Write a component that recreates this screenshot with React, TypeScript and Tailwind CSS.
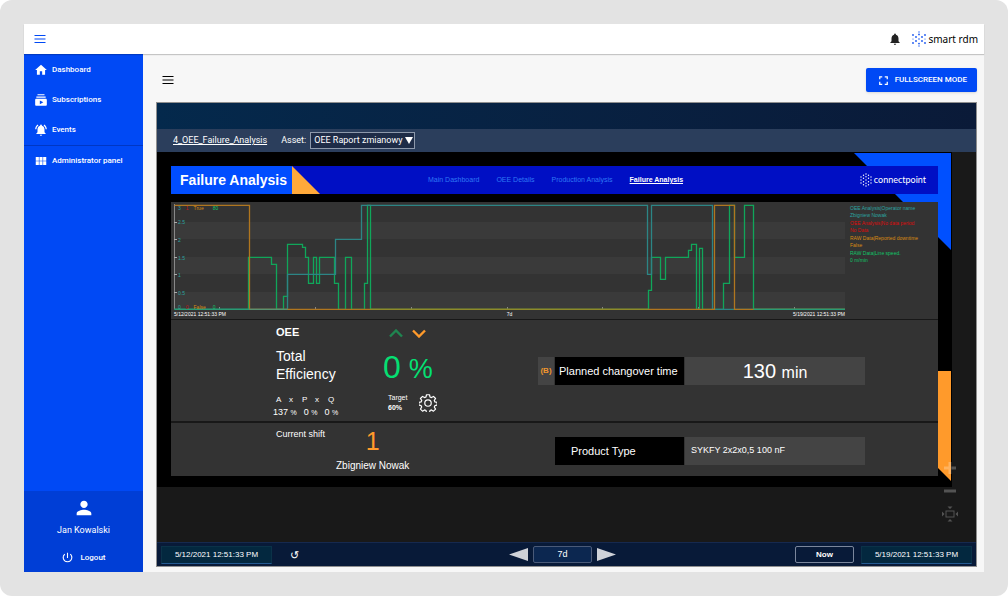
import { ReactNode } from "react";
import {
  MdFullscreen,
  MdHome,
  MdNotifications,
  MdNotificationsActive,
  MdPerson,
  MdPowerSettingsNew,
  MdSubscriptions,
  MdViewModule,
} from "react-icons/md";

type Point = [number, number];

const CHART_WIDTH = 671;
const CHART_HEIGHT = 106;
const BASE = 105;
const TOP = 1;

// Each entry is "from this x on, the line runs at this y"
const lineSpeed: Point[] = [
  [0, BASE], [74, 53], [97, 60], [102, BASE], [109, 92], [113, 40], [128, 43],
  [131, 53], [134, 79], [139, 53], [142, 79], [145, 53], [160, 79], [164, BASE],
  [171, 53], [177, BASE], [190, 79], [193, TOP], [196, BASE], [474, 86],
  [477, 53], [486, 75], [491, 53], [514, 46], [517, 40], [522, BASE], [525, 44],
  [528, BASE], [549, 79], [555, TOP], [560, 53], [570, TOP], [579, BASE],
];

const operator: Point[] = [
  [0, BASE], [113, 70], [161, 35], [187, TOP], [473, 70], [477, TOP], [538, BASE],
];

const downtime: Point[] = [[0, TOP], [75, BASE], [540, TOP], [560, BASE]];

const legend = [
  { name: "OEE Analysis|Operator name", value: "Zbigniew Nowak", color: "text-[#2ba5a0]" },
  { name: "OEE Analysis|No data period", value: "No Data", color: "text-[#dd0c0c]" },
  { name: "RAW Data|Reported downtime", value: "False", color: "text-[#d98a12]" },
  { name: "RAW Data|Line speed.", value: "0 m/min", color: "text-[#10c468]" },
];

const menu = [
  { label: "Dashboard", icon: <MdHome size={14} /> },
  { label: "Subscriptions", icon: <MdSubscriptions size={14} /> },
  { label: "Events", icon: <MdNotificationsActive size={14} /> },
];

const tabs = ["Main Dashboard", "OEE Details", "Production Analysis", "Failure Analysis"];

function stepPath(points: Point[]) {
  const [first, ...rest] = points;
  const steps = rest.map(([x, y]) => `H${x}V${y}`).join("");
  return `M${first[0]} ${first[1]}${steps}H${CHART_WIDTH}`;
}

function MenuIcon() {
  return (
    <svg width="12" height="8" viewBox="0 0 12 8" stroke="currentColor" strokeWidth="1.2">
      <path d="M0.5 0.5H11.5M0.5 4H11.5M0.5 7.5H11.5" />
    </svg>
  );
}

function SmartLogo() {
  return (
    <svg width="14" height="16" viewBox="0 0 14 16" fill="#1a56f0">
      <circle cx="7" cy="1" r="0.7" />
      <circle cx="7" cy="3.4" r="0.9" />
      <circle cx="7" cy="12.6" r="0.9" />
      <circle cx="7" cy="15" r="0.7" />
      <circle cx="1" cy="4" r="0.9" />
      <circle cx="13" cy="4" r="0.9" />
      <circle cx="1" cy="8" r="0.6" />
      <circle cx="13" cy="8" r="0.6" />
      <circle cx="1" cy="12" r="0.9" />
      <circle cx="13" cy="12" r="0.9" />
      <circle cx="4" cy="6" r="0.9" />
      <circle cx="10" cy="6" r="0.9" />
      <circle cx="4" cy="10" r="0.9" />
      <circle cx="10" cy="10" r="0.9" />
      <circle cx="7" cy="8" r="0.8" />
    </svg>
  );
}

function ConnectLogo() {
  return (
    <svg width="12" height="14" viewBox="0 0 12 14" fill="white">
      <circle cx="6" cy="1" r="0.7" />
      <circle cx="3.5" cy="2.3" r="0.7" />
      <circle cx="8.5" cy="2.3" r="0.7" />
      <circle cx="1" cy="4" r="0.7" />
      <circle cx="11" cy="4" r="0.7" />
      <circle cx="6" cy="3.8" r="0.7" />
      <circle cx="3.5" cy="5.3" r="0.7" />
      <circle cx="8.5" cy="5.3" r="0.7" />
      <circle cx="1" cy="7" r="0.7" />
      <circle cx="6" cy="7" r="0.7" />
      <circle cx="11" cy="7" r="0.7" />
      <circle cx="3.5" cy="8.7" r="0.7" />
      <circle cx="8.5" cy="8.7" r="0.7" />
      <circle cx="1" cy="10" r="0.7" />
      <circle cx="11" cy="10" r="0.7" />
      <circle cx="6" cy="10.2" r="0.7" />
      <circle cx="3.5" cy="11.7" r="0.7" />
      <circle cx="8.5" cy="11.7" r="0.7" />
      <circle cx="6" cy="13" r="0.7" />
    </svg>
  );
}

function GearIcon() {
  return (
    <svg width="18" height="18" viewBox="0 0 24 24" fill="none" stroke="white" strokeWidth="1.6" strokeLinejoin="round">
      <path d="M10 1h4l.7 3 1.9.8 2.7-1.6 2.8 2.8-1.7 2.6.8 2 3 .6v3.6l-3 .7-.8 1.9 1.7 2.7-2.8 2.8-2.7-1.7-1.9.8-.7 3h-4l-.7-3-1.9-.8-2.7 1.7-2.8-2.8 1.7-2.7-.8-1.9-3-.7v-3.600l3-.6.8-2L1.900 6l2.800-2.800 2.700 1.600L9.300 4z" />
      <circle cx="12" cy="12" r="4.300" />
    </svg>
  );
}

function Sidebar() {
  return (
    <aside className="flex w-[119px] shrink-0 flex-col bg-[#0049f5] text-[8px] font-medium text-white">
      <nav className="pt-px">
        {menu.map((item) => (
          <a key={item.label} href="#" className="flex h-[30px] items-center gap-1 pl-[10px]">
            {item.icon}
            {item.label}
          </a>
        ))}
        <a href="#" className="flex h-[30px] items-center gap-1 border-t border-[#0037c4] pl-[10px]">
          <MdViewModule size={14} />
          Administrator panel
        </a>
      </nav>
      <div className="mt-auto flex flex-col items-center bg-[#003ed6] pt-[6px] pb-2">
        <MdPerson size={22} />
        <span className="mt-[5px] text-[9px] leading-3 font-normal">Jan Kowalski</span>
        <button className="mt-[15px] flex items-center gap-[6px] leading-3">
          <MdPowerSettingsNew size={13} />
          Logout
        </button>
      </div>
    </aside>
  );
}

function Chart() {
  return (
    <section className="flex bg-[#333333] pt-[2px] pr-1 pl-[3px] text-[5px]">
      <div className="min-w-0 flex-1">
        <div className="relative">
          <svg
            className="block h-[106px] w-full"
            viewBox={`0 0 ${CHART_WIDTH} ${CHART_HEIGHT}`}
            preserveAspectRatio="none"
            fill="none"
          >
            {[18, 53, 88].map((y) => (
              <rect key={y} x="0" y={y} width={CHART_WIDTH} height="17" fill="#3a3a3a" />
            ))}
            <path d="M0.5 0V105" stroke="#888888" />
            {[18, 35, 53, 70, 88].map((y) => (
              <path key={y} d={`M0 ${y}.5H3`} stroke="#aaaaaa" />
            ))}
            {[45, 141, 237, 333, 428, 524, 620].map((x) => (
              <path key={x} d={`M${x}.5 103V106`} stroke="#888888" />
            ))}
            <g transform="translate(0.5 0.3)" strokeWidth="1.3">
              <path d={stepPath(lineSpeed)} stroke="#10a65a" />
              <path d={stepPath(operator)} stroke="#2c8585" />
              <path d={stepPath(downtime)} stroke="#b0761f" />
              <path d="M0 105H75M579 105H671" stroke="#2a9a74" />
              <path d="M75 105H113" stroke="#5a9170" />
              <path d="M196 105H474" stroke="#8f8a2a" />
            </g>
          </svg>
          <div className="absolute inset-0 flex flex-col pl-1 leading-[6px] text-[#2ba5a0]">
            <div className="flex gap-[5px] pt-[1px]">
              <span>3</span>
              <span className="text-[#c01818]">1</span>
              <span className="text-[#d98a12]">True</span>
              <span className="pl-1 text-[#10c468]">80</span>
            </div>
            <div className="flex flex-1 flex-col justify-between py-2">
              <span>2.5</span>
              <span>2</span>
              <span>1.5</span>
              <span>1</span>
              <span>0.5</span>
            </div>
            <div className="flex gap-[5px]">
              <span>0</span>
              <span className="text-[#c01818]">0</span>
              <span className="text-[#d98a12]">False</span>
              <span className="pl-[2px] text-[#10c468]">0</span>
            </div>
          </div>
        </div>
        <div className="flex justify-between leading-[9px] text-white">
          <span>5/12/2021 12:51:33 PM</span>
          <span>7d</span>
          <span>5/19/2021 12:51:33 PM</span>
        </div>
      </div>
      <ul className="ml-[5px] w-[84px] shrink-0 pt-px leading-[7px]">
        {legend.map((item) => (
          <li key={item.name} className={`mb-px ${item.color}`}>
            {item.name}
            <br />
            {item.value}
          </li>
        ))}
      </ul>
    </section>
  );
}

function Factors() {
  return (
    <div className="mt-[11px] -ml-[3px] leading-3">
      <div className="flex pl-[3px] text-[8px]">
        {["A", "x", "P", "x", "Q"].map((name, i) => (
          <span key={i} className="w-[13px]">
            {name}
          </span>
        ))}
      </div>
      <div className="flex gap-[7px] text-[9px]">
        {["137", "0", "0"].map((value, i) => (
          <span key={i}>
            {value} <span className="text-[7px]">%</span>
          </span>
        ))}
      </div>
    </div>
  );
}

interface FieldProps {
  label: string;
  badge?: string;
  labelClass: string;
  children: ReactNode;
}

function Field({ label, badge, labelClass, children }: FieldProps) {
  return (
    <div className="flex h-7 gap-px">
      {badge && (
        <span className="flex w-4 items-center justify-center bg-[#444444] text-[8px] font-bold text-[#f0962e]">
          {badge}
        </span>
      )}
      <span className={`flex w-[129px] items-center bg-black text-[11px] whitespace-nowrap ${labelClass}`}>
        {label}
      </span>
      <div className="flex w-[180px] items-center bg-[#444444]">{children}</div>
    </div>
  );
}

function Efficiency() {
  return (
    <section className="mt-px flex justify-between bg-[#333333] pr-[73px] pl-[105px] text-white">
      <div className="flex h-[101px] pt-[5px]">
        <div className="w-[107px]">
          <h2 className="text-[11px] leading-[14px] font-bold">OEE</h2>
          <p className="mt-2 text-[14px] leading-[18px]">
            Total
            <br />
            Efficiency
          </p>
          <Factors />
        </div>
        <div>
          <div className="flex gap-[9px] pt-1 pl-[6px]">
            <svg width="14" height="9" viewBox="0 0 14 9" fill="none" stroke="#1f8550" strokeWidth="2.4">
              <path d="M1 7.500L7 1.500L13 7.500" />
            </svg>
            <svg width="14" height="9" viewBox="0 0 14 9" fill="none" stroke="#ff9a2b" strokeWidth="2.4">
              <path d="M1 1.500L7 7.500L13 1.500" />
            </svg>
          </div>
          <div className="mt-[11px] flex items-baseline gap-2 text-[32px] leading-9 text-[#05df72]">
            0<span className="text-[27px]">%</span>
          </div>
          <div className="mt-[6px] flex items-center gap-3 pl-[5px]">
            <div className="text-[7px] leading-[10px]">
              Target
              <br />
              <b>60%</b>
            </div>
            <button aria-label="Settings">
              <GearIcon />
            </button>
          </div>
        </div>
      </div>
      <div className="pt-[37px]">
        <Field label="Planned changover time" badge="(B)" labelClass="pl-1">
          <span className="w-full text-center text-[20px]">
            130 <span className="text-[16px]">min</span>
          </span>
        </Field>
      </div>
    </section>
  );
}

function Shift() {
  return (
    <section className="mt-[2px] flex justify-between bg-[#333333] pr-[73px] pl-[105px] text-white">
      <div className="flex h-[53px] pt-[5px]">
        <span className="w-[60px] text-[9px] leading-3">Current shift</span>
        <div className="flex flex-col items-center">
          <span className="text-[25px] leading-[26px] text-[#ff9a2b]">1</span>
          <span className="mt-[6px] text-[10px] leading-3">Zbigniew Nowak</span>
        </div>
      </div>
      <div className="pt-[14px]">
        <Field label="Product Type" labelClass="pl-4">
          <span className="pl-[6px] text-[9px]">SYKFY 2x2x0,5 100 nF</span>
        </Field>
      </div>
    </section>
  );
}

function Dashboard() {
  return (
    <div className="relative mr-6 bg-black px-[14px] pt-[14px] pb-[11px]">
      <svg className="absolute top-px right-px" width="97" height="97" fill="#0050ff">
        <path d="M0 0H97V97Z" />
      </svg>
      <svg className="absolute right-px bottom-[6px]" width="13" height="110" fill="#ff9a2b">
        <path d="M0 0H13V110L0 97Z" />
      </svg>
      <div className="relative">
        <header className="flex h-7 items-center bg-[#000fc4]">
          <h1 className="flex h-7 w-[121px] items-center justify-center bg-[#004dff] pl-1 text-[14px] font-bold text-white">
            Failure Analysis
          </h1>
          <svg width="28" height="28" fill="#ffa93a">
            <path d="M0 0L28 28H0Z" />
          </svg>
          <nav className="ml-[108px] flex gap-[17px] text-[7px] text-[#2f78f5]">
            {tabs.map((tab) => (
              <a
                key={tab}
                href="#"
                className={tab === "Failure Analysis" ? "font-bold text-white underline" : ""}
              >
                {tab}
              </a>
            ))}
          </nav>
          <div className="mr-3 ml-auto flex items-center gap-[2px] font-[Lato] text-[9px] text-white">
            <ConnectLogo />
            connectpoint
          </div>
        </header>
        <main className="mt-2 bg-[#181818]">
          <Chart />
          <Efficiency />
          <Shift />
        </main>
      </div>
    </div>
  );
}

function ZoomControls() {
  return (
    <div className="absolute right-[15px] bottom-[17px] flex flex-col gap-px text-white opacity-25">
      <button aria-label="Zoom in" className="flex h-[22px] w-[22px] items-center justify-center">
        <svg width="12" height="12" stroke="currentColor" strokeWidth="3">
          <path d="M0 6H12M6 0V12" />
        </svg>
      </button>
      <button aria-label="Zoom out" className="flex h-[22px] w-[22px] items-center justify-center">
        <svg width="12" height="12" stroke="currentColor" strokeWidth="3">
          <path d="M0 6H12" />
        </svg>
      </button>
      <button aria-label="Fit to screen" className="flex h-[22px] w-[22px] items-center justify-center">
        <svg width="18" height="16" viewBox="0 0 18 16" fill="currentColor">
          <rect x="5" y="5" width="8" height="6" fill="none" stroke="currentColor" />
          <path d="M1 5.500L3.500 8L1 10.500ZM17 5.500L14.500 8L17 10.500ZM6.500 0.500H11.500L9 3ZM6.500 15.500H11.500L9 13Z" />
        </svg>
      </button>
    </div>
  );
}

export default function App() {
  return (
    <div className="min-h-screen bg-white">
      <div className="flex min-h-screen flex-col rounded-xl bg-[#e3e3e3] p-6 font-[Roboto,sans-serif]">
        <header className="z-10 flex h-[30px] items-center bg-white pr-[6px] pl-[10px] shadow-[0_1px_1px_rgba(0,0,0,0.2)]">
          <button aria-label="Toggle menu" className="text-[#0049f5]">
            <MenuIcon />
          </button>
          <button aria-label="Notifications" className="ml-auto text-[#222222]">
            <MdNotifications size={14} />
          </button>
          <div className="ml-[10px] flex items-center gap-[2px] font-['Noto_Sans'] text-[10px] leading-[14px] text-black">
            <SmartLogo />
            smart rdm
          </div>
        </header>

        <div className="flex flex-1">
          <Sidebar />
          <div className="flex min-w-0 flex-1 flex-col bg-[#f7f7f7] pr-[7px] pb-[5px] pl-[13px]">
            <div className="flex h-12 items-center justify-between pt-1 pl-[6px]">
              <button aria-label="Views">
                <MenuIcon />
              </button>
              <button className="flex h-6 items-center gap-1 rounded-xs bg-[#0049f5] px-[10px] text-[8px] font-medium text-white shadow">
                <MdFullscreen size={15} />
                FULLSCREEN MODE
              </button>
            </div>

            <div className="flex flex-1 flex-col border border-[#8f8f8f] bg-[#191919] font-['Liberation_Sans',sans-serif]">
              <div className="h-[26px] bg-linear-to-r from-[#04294c] to-[#0a1a38]" />
              <div className="flex h-[23px] items-center bg-[#2b3e5c] pl-4 font-[Roboto,sans-serif] text-[9px] text-white">
                <a href="#" className="underline">
                  4_OEE_Failure_Analysis
                </a>
                <label htmlFor="asset" className="ml-[14px]">
                  Asset:
                </label>
                <div className="relative ml-1">
                  <select
                    id="asset"
                    className="block h-[17px] w-[105px] appearance-none border border-[#8d99ab] bg-[#1e2c47] pl-[3px]"
                  >
                    <option>OEE Raport zmianowy</option>
                  </select>
                  <svg className="pointer-events-none absolute top-[5px] right-[2px]" width="8" height="7" fill="white">
                    <path d="M0 0H8L4 7Z" />
                  </svg>
                </div>
              </div>

              <div className="relative flex-1">
                <Dashboard />
                <ZoomControls />
              </div>

              <footer className="flex h-6 items-center border-t border-[#16294e] bg-[#081a38] px-1 text-[8px] text-white">
                <div className="flex flex-1 items-center">
                  <button className="h-[18px] w-[111px] border border-[#0b3248] border-b-[#245a92] bg-[#03283f]">
                    5/12/2021 12:51:33 PM
                  </button>
                  <button aria-label="Reset range" className="ml-[18px] pt-1 font-['DejaVu_Sans'] text-[11px]">
                    ↺
                  </button>
                </div>
                <div className="mr-2 flex items-center gap-[5px]">
                  <button aria-label="Previous">
                    <svg width="19" height="13" fill="#cfd2d8">
                      <path d="M19 0V13L0 6.500Z" />
                    </svg>
                  </button>
                  <button className="h-[17px] w-[59px] rounded-xs border border-[#4a5a78] bg-[#0c2750] text-[9px]">
                    7d
                  </button>
                  <button aria-label="Next">
                    <svg width="19" height="13" fill="#cfd2d8">
                      <path d="M0 0V13L19 6.500Z" />
                    </svg>
                  </button>
                </div>
                <div className="flex flex-1 items-center justify-end gap-[7px]">
                  <button className="h-[17px] w-[59px] rounded-xs border border-[#7a869c] font-bold">Now</button>
                  <button className="h-[18px] w-[111px] border border-[#0b3248] border-b-[#245a92] bg-[#03283f]">
                    5/19/2021 12:51:33 PM
                  </button>
                </div>
              </footer>
            </div>
          </div>
        </div>
      </div>
    </div>
  );
}
